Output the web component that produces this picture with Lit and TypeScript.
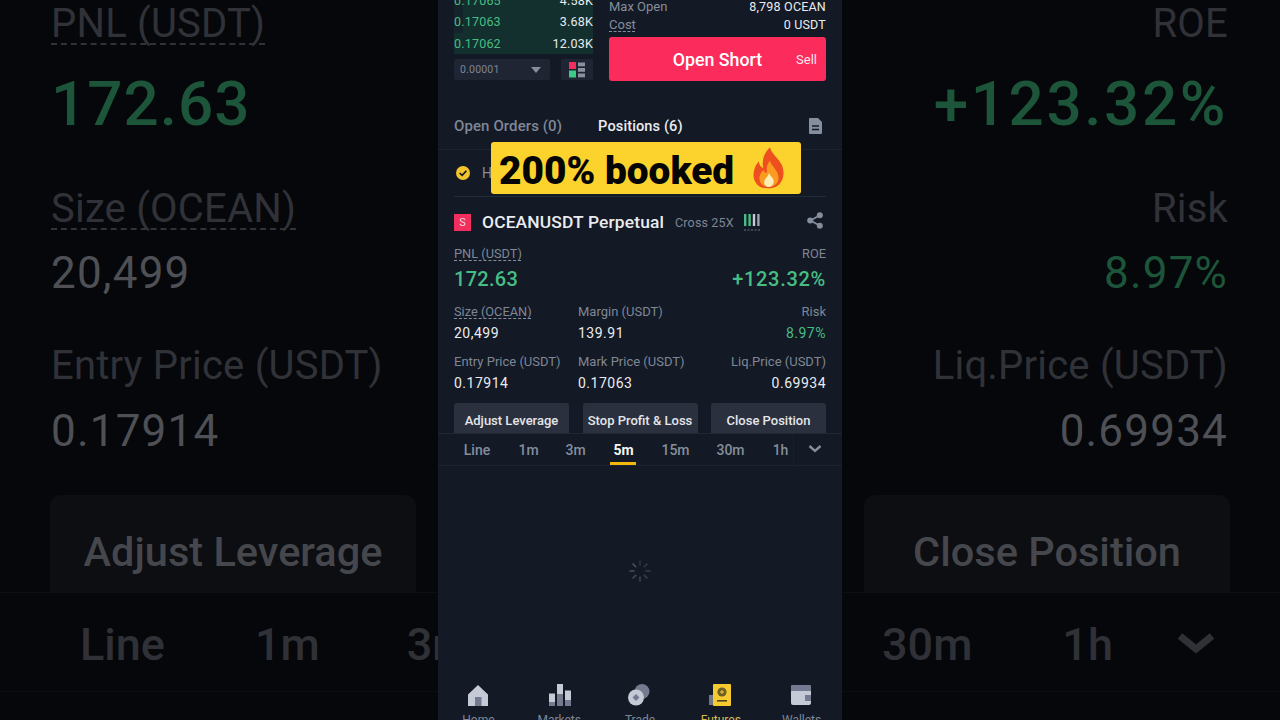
import { LitElement, html, css, svg } from "lit";
import { customElement } from "lit/decorators.js";

const FONT = css`Roboto, "Liberation Sans", sans-serif`;

const ICONS = {
  home: svg`<path d="M11 1 L21 10.5 V22 H1 V10.5 Z" fill="#c6cad6"/><rect x="8" y="13" width="6.5" height="9" fill="#747b90"/>`,
  markets: svg`<rect x="1" y="9.5" width="6" height="12.5" fill="#c6cad6"/><rect x="1" y="18" width="6" height="4" fill="#747b90"/><rect x="9" y="0" width="6" height="22" fill="#c6cad6"/><rect x="9" y="10" width="6" height="12" fill="#747b90"/><rect x="17" y="6.5" width="6" height="15.5" fill="#c6cad6"/><rect x="17" y="16" width="6" height="6" fill="#747b90"/>`,
  trade: svg`<circle cx="14" cy="7.5" r="7.5" fill="#747b90"/><circle cx="8" cy="13.5" r="8" fill="#c6cad6"/><path d="M8 10 L11.5 13.5 L8 17 L4.5 13.5 Z" fill="#747b90"/>`,
  futures: svg`<rect x="0" y="11" width="6" height="10" fill="#6f7689"/><rect x="4" y="0" width="18" height="22" rx="1" fill="#f6cb2f"/><circle cx="13" cy="8" r="4.6" fill="#6e5f2a"/><path d="M11 8 H15 M13 6 V10" stroke="#f6cb2f" stroke-width="1"/><rect x="8" y="16" width="10" height="1.6" fill="#4e4420"/>`,
  wallets: svg`<rect x="1" y="1" width="20" height="20" rx="2" fill="#c6cad6"/><path d="M1 7 V3 A2 2 0 0 1 3 1 H19 A2 2 0 0 1 21 3 V7 Z" fill="#747b90"/><rect x="15" y="11" width="6" height="6" fill="#747b90"/>`,
};

const NAV: [string, keyof typeof ICONS, boolean][] = [
  ["Home", "home", false],
  ["Markets", "markets", false],
  ["Trade", "trade", false],
  ["Futures", "futures", true],
  ["Wallets", "wallets", false],
];

const TF: [string, number][] = [
  ["Line", 477], ["1m", 528.5], ["3m", 575.5], ["5m", 623.5], ["15m", 675.5], ["30m", 730.5], ["1h", 780.5],
];

@customElement("app-root")
export class AppRoot extends LitElement {
  static styles = css`
    :host { display: block; width: 1280px; height: 720px; overflow: hidden; font-family: ${FONT}; position: relative; background: #05070b; }
    .page { display: flex; width: 1280px; height: 720px; }

    /* blurred side copies */
    .side { width: 438px; height: 720px; flex: none; overflow: hidden; background: #05070b; display: flex; flex-direction: column; }
    .sbody { height: 592px; flex: none; display: flex; flex-direction: column; }
    .left .sbody { padding-left: 51px; }
    .right .sbody { padding-right: 52px; align-items: flex-end; }
    .sl { font-size: 40px; line-height: 48px; color: #303238; white-space: nowrap; letter-spacing: .2px; height: 48px; flex: none; }
    .dash { text-decoration: underline dashed #303238 2px; text-underline-offset: 6px; text-decoration-skip-ink: none; }
    .sv { font-size: 44px; line-height: 56px; height: 56px; color: #4e5055; letter-spacing: 1.2px; white-space: nowrap; flex: none; }
    .sg { color: #1c5539; }
    .big { font-size: 62px; font-weight: 500; line-height: 60px; height: 60px; letter-spacing: 1px; }
    .right .big { letter-spacing: 2.6px; }
    .mt51 { margin-top: 51px; }
    .mt12 { margin-top: 12px; }
    .mt41 { margin-top: 41px; }
    .mt13 { margin-top: 13px; }
    .mt26 { margin-top: 26px; }
    .sbtn { margin-top: 36px; width: 366px; height: 97px; flex: none; box-sizing: border-box; background: #0c0e12; border-radius: 10px 10px 0 0; display: flex; justify-content: center; padding-top: 33px; font-size: 41.5px; line-height: 48px; font-weight: 500; color: #45474c; white-space: nowrap; }
    .left .sbtn { margin-left: -1px; }
    .right .sbtn { margin-right: -2px; }
    .stabs { height: 100px; flex: none; box-sizing: border-box; border-top: 1px solid #0c0e12; border-bottom: 1px solid #0b0d11; display: flex; align-items: center; font-size: 45px; font-weight: 500; color: #2f3136; white-space: nowrap; padding-top: 4px; }
    .left .stabs { padding-left: 80px; gap: 90px; }
    .left .stabs .g2 { margin-left: -3px; }
    .right .stabs { padding-left: 40px; }
    .right .stabs .h1 { margin-left: 90px; }
    .schev { margin-left: 64px; width: 38px; height: 24px; }

    /* phone */
    .phone { width: 404px; height: 720px; flex: none; overflow: hidden; background: #131925; display: flex; flex-direction: column; color: #eaecef; }
    .top { height: 95px; flex: none; padding: 0 16px; display: flex; gap: 16px; box-sizing: border-box; }
    .book { width: 139px; flex: none; display: flex; flex-direction: column; }
    .rows { height: 54px; flex: none; display: flex; flex-direction: column; justify-content: flex-end; }
    .row { height: 21.5px; flex: none; display: flex; justify-content: space-between; align-items: center; font-size: 12.5px; letter-spacing: .2px; color: #eaecef; background: linear-gradient(90deg, #15242a 0 9px, #14302e 9px 100%); }
    .row:last-child { background: #14302e; }
    .row b { font-weight: 400; color: #47bd84; }
    .ctrls { display: flex; justify-content: space-between; margin-top: 5px; }
    .sel { width: 96px; height: 21px; background: #1f2533; border-radius: 2px; display: flex; align-items: center; justify-content: space-between; padding: 0 9px 0 6px; box-sizing: border-box; font-size: 10.5px; color: #7d8595; letter-spacing: .2px; }
    .tri { width: 0; height: 0; border-left: 5px solid transparent; border-right: 5px solid transparent; border-top: 6px solid #848e9c; }
    .lay { width: 32px; height: 21px; background: #1f2533; border-radius: 2px; display: flex; align-items: center; justify-content: center; }
    .order { flex: 1; display: flex; flex-direction: column; }
    .kv { display: flex; justify-content: space-between; height: 18px; align-items: center; font-size: 13px; color: #848e9c; flex: none; }
    .kv span:last-child { color: #eaecef; font-size: 12.5px; letter-spacing: .2px; }
    .kv:first-child { margin-top: -3px; }
    .dot { text-decoration: underline dashed #848e9c 1px; text-underline-offset: 2px; text-decoration-skip-ink: none; }
    .short { margin-top: 4px; height: 44px; flex: none; background: #fb2b5c; border-radius: 3px; display: flex; align-items: center; position: relative; justify-content: center; font-size: 17.8px; font-weight: 500; color: #fff; }
    .short small { position: absolute; right: 9px; font-size: 13px; font-weight: 400; color: #f8e6ea; }
    .tabs { height: 55px; flex: none; box-sizing: border-box; border-bottom: 1px solid #1b2230; padding: 8px 20px 0 16px; display: flex; align-items: center; font-size: 15px; color: #7f8796; font-weight: 500; white-space: nowrap; letter-spacing: .1px; }
    .tabs .on { color: #eaecef; margin-left: 36px; font-size: 14.6px; }
    .tabs svg { margin-left: auto; }
    .hide { height: 47px; flex: none; margin: 0 16px; box-sizing: border-box; border-bottom: 1px solid #232a38; display: flex; align-items: center; font-size: 14px; color: #848e9c; padding-left: 2px; gap: 12px; }
    .sym { height: 50px; flex: none; display: flex; align-items: center; padding: 0 18px 0 16px; white-space: nowrap; }
    .badge { width: 17px; height: 17px; background: #f12e5d; color: #f7d7df; display: flex; align-items: center; justify-content: center; font-size: 11px; flex: none; }
    .name { margin-left: 11px; font-size: 17.4px; font-weight: 500; letter-spacing: .15px; }
    .lev { margin-left: 11px; font-size: 12.5px; color: #7f8796; letter-spacing: .15px; }
    .barsi { margin-left: 10px; }
    .sym .share { margin: 0 1px 3px auto; }
    .stats { display: flex; flex-direction: column; padding: 0 16px; height: 157px; flex: none; box-sizing: border-box; }
    .pr { display: flex; justify-content: space-between; font-size: 12.8px; color: #7f8796; line-height: 14px; }
    .pv { display: flex; justify-content: space-between; font-size: 20px; font-weight: 500; line-height: 24px; margin-top: 6px; color: #47bd84; letter-spacing: .3px; }
    .pv span:last-child { letter-spacing: .7px; }
    .g3 { display: grid; grid-template-columns: 124px 1fr auto; margin-top: 14px; font-size: 13px; color: #7f8796; line-height: 14px; white-space: nowrap; }
    .g3 span:nth-child(3n) { text-align: right; }
    .g3 .v { font-size: 14px; color: #eaecef; line-height: 16px; margin-top: 6px; letter-spacing: .5px; }
    .g3 .gr { color: #47bd84; }
    .g3 .u { justify-self: start; font-size: 12.8px; }
    .btns { height: 30px; flex: none; padding: 0 16px; display: flex; justify-content: space-between; margin-top: -1px; }
    .btn { width: 115px; height: 30px; background: #2a303e; border-radius: 3px 3px 0 0; display: flex; justify-content: center; padding-top: 10px; box-sizing: border-box; font-size: 13px; line-height: 16px; font-weight: 500; color: #e4e6ea; white-space: nowrap; }
    .tf { height: 33px; flex: none; box-sizing: border-box; border-top: 1px solid #202735; border-bottom: 1px solid #1b2230; position: relative; font-size: 14px; color: #848e9c; font-weight: 500; background: #131925; }
    .tfi { position: absolute; top: 7px; transform: translateX(-50%); line-height: 18px; }
    .tfi.on { color: #f4f5f7; font-weight: 700; }
    .ul { position: absolute; left: 172px; top: 28px; width: 26px; height: 3px; background: #f0b90b; }
    .chev { position: absolute; left: 370px; top: 10px; }
    .vd { position: absolute; left: 355px; top: 0; bottom: 0; width: 1px; background: #182030; }
    .chart { flex: 1; display: flex; align-items: center; justify-content: center; padding-bottom: 8px; }
    .nav { height: 36px; flex: none; display: flex; justify-content: center; overflow: hidden; }
    .ni { width: 81px; display: flex; flex-direction: column; align-items: center; font-size: 12px; color: #7f8796; line-height: 14px; }
    .ni svg { margin-bottom: 6px; flex: none; }
    .ni.on { color: #d9bb53; }

    .cap { position: absolute; left: 491px; top: 142px; width: 310px; height: 52px; box-sizing: border-box; background: #fcd32d; border-radius: 3px; display: flex; align-items: center; padding: 5px 0 0 8px; color: #050505; font-size: 38.8px; font-weight: 900; white-space: nowrap; }
    .cap svg { margin: -5px 0 0 auto; position: relative; right: 14px; flex: none; }
  `;

  private sideLeft() {
    return html`<div class="side left">
      <div class="sbody">
        <div class="sl"><span class="dash">PNL (USDT)</span></div>
        <div class="sv big sg mt26">172.63</div>
        <div class="sl mt51"><span class="dash">Size (OCEAN)</span></div>
        <div class="sv mt12">20,499</div>
        <div class="sl mt41">Entry Price (USDT)</div>
        <div class="sv mt13">0.17914</div>
        <div class="sbtn">Adjust Leverage</div>
      </div>
      <div class="stabs"><span>Line</span><span>1m</span><span class="g2">3m</span></div>
    </div>`;
  }

  private sideRight() {
    return html`<div class="side right">
      <div class="sbody">
        <div class="sl">ROE</div>
        <div class="sv big sg mt26">+123.32%</div>
        <div class="sl mt51">Risk</div>
        <div class="sv sg mt12">8.97%</div>
        <div class="sl mt41">Liq.Price (USDT)</div>
        <div class="sv mt13">0.69934</div>
        <div class="sbtn">Close Position</div>
      </div>
      <div class="stabs"><span>30m</span><span class="h1">1h</span>
        <svg class="schev" viewBox="0 0 38 24"><path d="M3 4 L19 17 L35 4" fill="none" stroke="#2f3136" stroke-width="7"/></svg>
      </div>
    </div>`;
  }

  private spinner() {
    const spokes = [0, 45, 90, 135, 180, 225, 270, 315];
    return html`<svg width="24" height="24" viewBox="-12 -12 24 24">
      ${spokes.map((a, i) => svg`<line x1="0" y1="-5.5" x2="0" y2="-10.5" stroke="#4a505d" stroke-opacity=${0.45 + i * 0.07} stroke-width="1.7" transform="rotate(${a})"/>`)}
    </svg>`;
  }

  private phone() {
    return html`<div class="phone">
      <div class="top">
        <div class="book">
          <div class="rows">
            <div class="row"><b>0.17065</b><span>4.58K</span></div>
            <div class="row"><b>0.17063</b><span>3.68K</span></div>
            <div class="row"><b>0.17062</b><span>12.03K</span></div>
          </div>
          <div class="ctrls">
            <div class="sel">0.00001<span class="tri"></span></div>
            <div class="lay"><svg width="16" height="16" viewBox="0 0 16 16">
              <rect x="0" y="0" width="7" height="7" fill="#f12e5d"/><rect x="0" y="8.5" width="7" height="7" fill="#3dc987"/>
              <rect x="9" y="0.5" width="7" height="3.8" fill="#8a91a0"/><rect x="9" y="6" width="7" height="3.8" fill="#8a91a0"/><rect x="9" y="11.5" width="7" height="3.8" fill="#8a91a0"/>
            </svg></div>
          </div>
        </div>
        <div class="order">
          <div class="kv"><span>Max Open</span><span>8,798 OCEAN</span></div>
          <div class="kv"><span class="dot">Cost</span><span>0 USDT</span></div>
          <div class="short">Open Short<small>Sell</small></div>
        </div>
      </div>
      <div class="tabs"><span>Open Orders (0)</span><span class="on">Positions (6)</span>
        <svg width="13" height="16" viewBox="0 0 13 16"><path d="M1 0 H9 L13 4 V15 A1 1 0 0 1 12 16 H1 A1 1 0 0 1 0 15 V1 A1 1 0 0 1 1 0 Z" fill="#848e9c"/><path d="M3 8 H10 M3 11.5 H10" stroke="#131925" stroke-width="1.6"/></svg>
      </div>
      <div class="hide">
        <svg width="14" height="14" viewBox="0 0 14 14"><circle cx="7" cy="7" r="7" fill="#f3c42c"/><path d="M3.6 7 L6.2 9.4 L10.4 4.8" fill="none" stroke="#131925" stroke-width="1.7"/></svg>
        <span>Hide Other Symbols</span>
      </div>
      <div class="sym">
        <span class="badge">S</span>
        <span class="name">OCEANUSDT Perpetual</span>
        <span class="lev">Cross 25X</span>
        <svg class="barsi" width="16" height="17" viewBox="0 0 16 17">
          <rect x="0" y="0" width="2.4" height="12" fill="#47bd84"/><rect x="4.4" y="0" width="2.4" height="12" fill="#47bd84"/><rect x="8.8" y="0" width="2.4" height="12" fill="#c6cad6"/><rect x="13.2" y="0" width="2.4" height="12" fill="#9ba3b0"/>
          <path d="M0 16 H16" stroke="#6b7380" stroke-dasharray="2 1.5"/>
        </svg>
        <svg class="share" width="16" height="17" viewBox="0 0 16 17"><path d="M12.5 3.5 L3.5 8.5 L12.5 13.5" fill="none" stroke="#848e9c" stroke-width="1.8"/><circle cx="12.8" cy="3.2" r="3" fill="#848e9c"/><circle cx="3.2" cy="8.5" r="3" fill="#848e9c"/><circle cx="12.8" cy="13.8" r="3" fill="#848e9c"/></svg>
      </div>
      <div class="stats">
        <div class="pr"><span class="dot">PNL (USDT)</span><span>ROE</span></div>
        <div class="pv"><span>172.63</span><span>+123.32%</span></div>
        <div class="g3">
          <span class="u dot">Size (OCEAN)</span><span>Margin (USDT)</span><span>Risk</span>
          <span class="v">20,499</span><span class="v">139.91</span><span class="v gr">8.97%</span>
        </div>
        <div class="g3">
          <span>Entry Price (USDT)</span><span>Mark Price (USDT)</span><span>Liq.Price (USDT)</span>
          <span class="v">0.17914</span><span class="v">0.17063</span><span class="v">0.69934</span>
        </div>
      </div>
      <div class="btns">
        <div class="btn">Adjust Leverage</div><div class="btn">Stop Profit &amp; Loss</div><div class="btn">Close Position</div>
      </div>
      <div class="tf">
        ${TF.map(([t, x]) => html`<span class="tfi ${t === "5m" ? "on" : ""}" style="left:${x - 438}px">${t}</span>`)}
        <span class="ul"></span>
        <span class="vd"></span>
        <svg class="chev" width="14" height="10" viewBox="0 0 14 10"><path d="M1.5 2 L7 7 L12.5 2" fill="none" stroke="#848e9c" stroke-width="2.4"/></svg>
      </div>
      <div class="chart">${this.spinner()}</div>
      <div class="nav">
        ${NAV.map(([l, ic, on]) => html`<div class="ni ${on ? "on" : ""}"><svg width="23" height="23" viewBox="0 0 23 23">${ICONS[ic]}</svg><span>${l}</span></div>`)}
      </div>
    </div>`;
  }

  render() {
    return html`<div class="page">${this.sideLeft()}${this.phone()}${this.sideRight()}</div>
      <div class="cap">200% booked
        <svg width="36" height="44" viewBox="0 0 38 44">
          <path d="M20 0 C22 8 30 12 33 20 C36 28 34 38 26 42 C22 44 14 44 10 42 C3 38 1 30 4 22 C5 19 7 17 8 15 C9 19 10 21 13 22 C11 14 14 6 20 0 Z" fill="#ee4f1f"/>
          <path d="M20 14 C21 20 28 23 29 31 C30 37 25 42 19 42 C13 42 8 38 9 31 C10 27 12 25 13 24 C14 26 15 27 17 27 C16 22 17 18 20 14 Z" fill="#fb9c20"/>
          <path d="M19 27 C20 31 24 32 24 36 C24 40 21 42 19 42 C16 42 14 40 14 37 C14 33 18 32 19 27 Z" fill="#fdeeb8"/>
        </svg>
      </div>`;
  }
}
